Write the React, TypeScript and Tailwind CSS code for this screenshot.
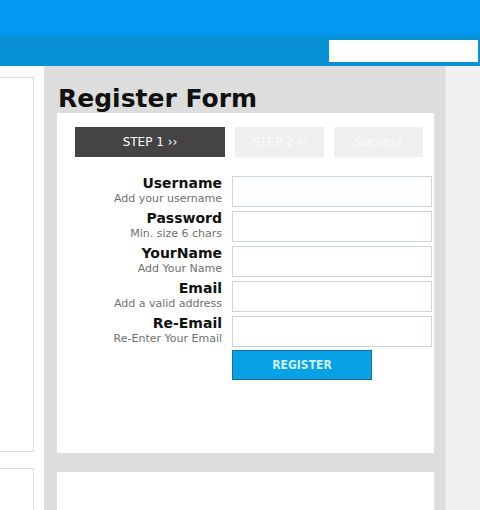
import React from "react";

const fields = [
  { label: "Username", hint: "Add your username" },
  { label: "Password", hint: "Min. size 6 chars" },
  { label: "YourName", hint: "Add Your Name" },
  { label: "Email", hint: "Add a valid address" },
  { label: "Re-Email", hint: "Re-Enter Your Email" },
];

export default function App() {
  return (
    <div
      className="w-[480px] h-[510px] overflow-hidden bg-white flex flex-col"
      style={{ fontFamily: '"DejaVu Sans", Verdana, sans-serif' }}
    >
      {/* header */}
      <div className="h-[35px] bg-[#0299f5] shrink-0" />
      <div className="h-[31px] bg-[#0991d5] shrink-0 flex items-start justify-end pt-[5px] pr-[2px]">
        <div className="w-[149px] h-[22px] bg-white" />
      </div>

      <div className="flex flex-1 min-h-0">
        {/* left column */}
        <div className="w-[44px] shrink-0 flex flex-col pt-[11px]">
          <div className="w-[34px] h-[375px] border border-l-0 border-[#dcdcdc] bg-white" />
          <div className="w-[34px] flex-1 mt-[16px] border border-l-0 border-b-0 border-[#dcdcdc] bg-white" />
        </div>

        {/* main column */}
        <div className="w-[401px] shrink-0 bg-[#dddddd] pl-[13px] pr-[11px] flex flex-col">
          <h1 className="text-[25px] font-bold text-[#111] leading-none pt-[20px] pl-[1px] h-[47px]">
            Register Form
          </h1>
          <div className="bg-white h-[340px] pl-[18px] pr-[3px] pt-[14px]">
            <div className="flex gap-[10px] text-[12px]">
              <div className="w-[150px] shrink-0 h-[30px] bg-[#444] text-white flex items-center justify-center">
                STEP 1 ››
              </div>
              <div className="w-[89px] shrink-0 h-[30px] bg-[#efefef] text-[#fbfbfb] flex items-center justify-center">
                STEP 2 ››
              </div>
              <div className="w-[89px] shrink-0 h-[30px] bg-[#efefef] text-[#fbfbfb] flex items-center justify-center">
                Success
              </div>
            </div>

            <div className="mt-[19px] flex flex-col gap-[4px]">
              {fields.map((f) => (
                <div key={f.label} className="flex items-start">
                  <div className="w-[157px] shrink-0 text-right pr-[10px] -mt-[1px]">
                    <div className="text-[14px] font-bold text-[#111] leading-[17px]">
                      {f.label}
                    </div>
                    <div className="text-[11px] text-[#707070] leading-[13px] whitespace-nowrap">
                      {f.hint}
                    </div>
                  </div>
                  <div className="w-[200px] shrink-0 h-[31px] border border-[#c9d6df] bg-white" />
                </div>
              ))}
              <div className="flex">
                <div className="w-[157px] shrink-0" />
                <button
                  className="w-[140px] shrink-0 h-[30px] -mt-[1px] bg-[#07a2e6] border border-[#1d6e96] text-[#cdeeff] text-[12px] font-bold"
                  style={{ fontFamily: '"DejaVu Sans Condensed", "DejaVu Sans", sans-serif' }}
                >
                  REGISTER
                </button>
              </div>
            </div>
          </div>
          <div className="bg-white flex-1 mt-[19px]" />
        </div>

        {/* right column */}
        <div className="flex-1 bg-[#f0f0f0] border-l border-[#e6e6e6]" />
      </div>
    </div>
  );
}
